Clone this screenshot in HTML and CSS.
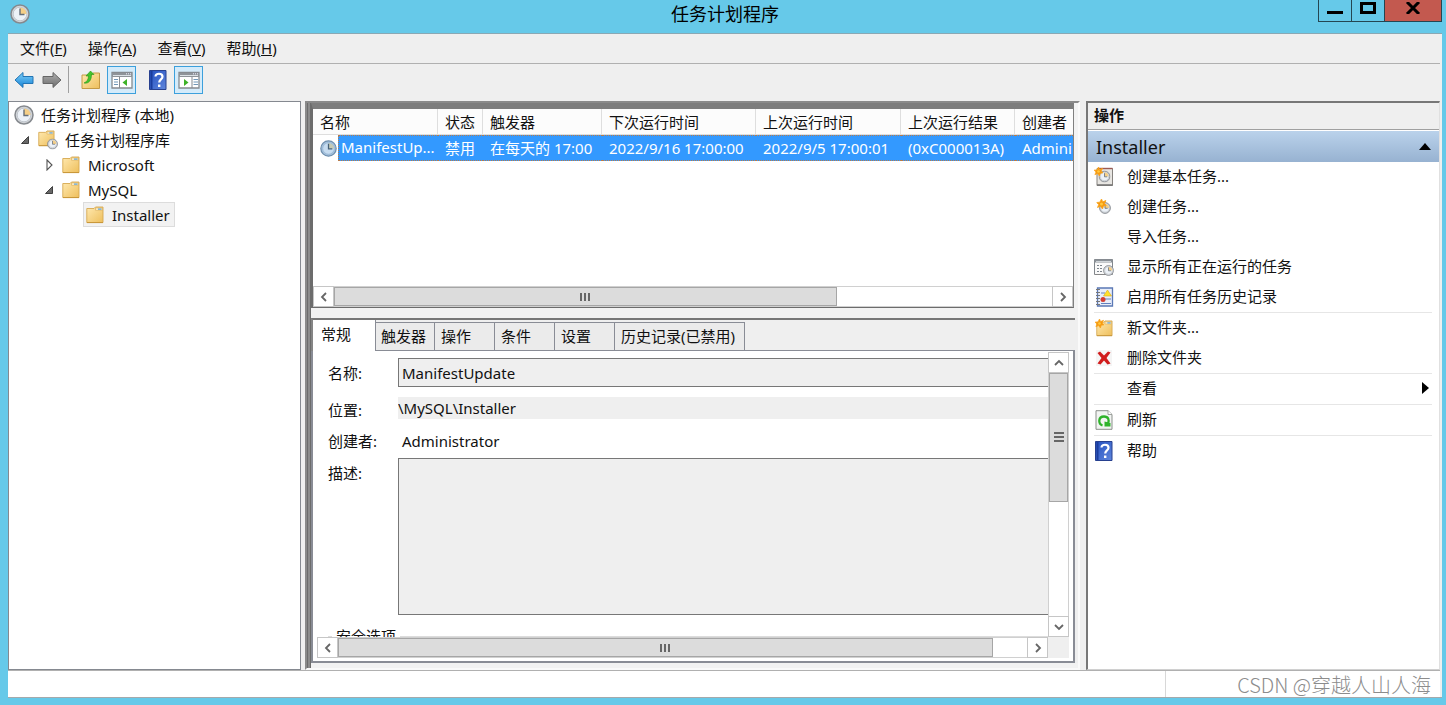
FILE: index.html
```html
<!DOCTYPE html>
<html lang="zh-CN">
<head>
<meta charset="utf-8">
<title>任务计划程序</title>
<link rel="stylesheet" href="styles.css">
</head>
<body>
<svg class="defs" aria-hidden="true">
  <defs>
    <linearGradient id="gFolder" x1="0" y1="0" x2="1" y2="1"><stop offset="0" stop-color="#ffe9b0"/><stop offset="1" stop-color="#eebf5c"/></linearGradient>
    <linearGradient id="gBlue" x1="0" y1="0" x2="0" y2="1"><stop offset="0" stop-color="#7fd0f8"/><stop offset="1" stop-color="#1482d6"/></linearGradient>
    <linearGradient id="gGray" x1="0" y1="0" x2="0" y2="1"><stop offset="0" stop-color="#b0b0b0"/><stop offset="1" stop-color="#6c6c6c"/></linearGradient>
    <linearGradient id="gHelp" x1="0" y1="0" x2="1" y2="1"><stop offset="0" stop-color="#2450c0"/><stop offset="1" stop-color="#5f86dc"/></linearGradient>
    <symbol id="clock" viewBox="0 0 20 20">
      <circle cx="10" cy="10" r="9" fill="#d3d6da" stroke="#85898e" stroke-width="1.5"/>
      <circle cx="10" cy="10" r="6.8" fill="#edf2f8" stroke="#b9bfc6" stroke-width=".8"/>
      <path d="M10 10V3.4A6.6 6.6 0 0 1 16.6 10Z" fill="#f5cf88"/>
      <path d="M10 4.5V10.5H14.5" fill="none" stroke="#66707b" stroke-width="1.4"/>
    </symbol>
    <symbol id="taskclock" viewBox="0 0 20 20">
      <circle cx="10" cy="10" r="9" fill="#a9c4de" stroke="#6f8fae" stroke-width="1.5"/>
      <circle cx="10" cy="10" r="6.8" fill="#c7dcf0" stroke="#8eb0d0" stroke-width=".8"/>
      <path d="M10 10V3.4A6.6 6.6 0 0 1 16.6 10Z" fill="#c5c9b4"/>
      <path d="M10 4.500V10.500H14.500" fill="none" stroke="#476177" stroke-width="1.5"/>
    </symbol>
    <symbol id="folder" viewBox="0 0 18 18">
      <path d="M.8 2.5H8L9.5 1H17V16.5H.8Z" fill="url(#gFolder)" stroke="#d6a850" stroke-width=".9"/>
      <path d="M9.5 2H16.3V4.2H9.5Z" fill="#fff6d8" stroke="#d6a850" stroke-width=".6"/>
      <path d="M12 3.1H15.5" stroke="#4c9be0" stroke-width="1.1"/>
      <path d="M1 16.6H17" stroke="#c79638"/>
    </symbol>
    <symbol id="library" viewBox="0 0 20 20">
      <use href="#folder" width="17" height="17"/>
      <use href="#clock" x="9" y="8.500" width="11" height="11"/>
    </symbol>
    <symbol id="open" viewBox="0 0 10 10"><path d="M8.500 1.500V8.500H1.500Z" fill="#686868" stroke="#222" stroke-width=".8"/></symbol>
    <symbol id="shut" viewBox="0 0 10 12"><path d="M3 1L8 6L3 11Z" fill="#fff" stroke="#555" stroke-width="1.1"/></symbol>
    <symbol id="back" viewBox="0 0 20 18"><path d="M1 9L9 1.500V5.500H19V12.500H9V16.500Z" fill="url(#gBlue)" stroke="#2375b4"/></symbol>
    <symbol id="forward" viewBox="0 0 20 18"><path d="M19 9L11 1.500V5.500H1V12.500H11V16.500Z" fill="url(#gGray)" stroke="#666"/></symbol>
    <symbol id="up" viewBox="0 0 20 20">
      <path d="M1 5H10L12 3H18.500V18.500H1Z" fill="url(#gFolder)" stroke="#c59a45"/>
      <path d="M3 13C6 12 7.500 9 7.500 6H5L9.500 1L13 4.500H10.500C10.500 10 8 14 3 13Z" fill="#43c52c" stroke="#259415" stroke-width=".6"/>
    </symbol>
    <symbol id="paneleft" viewBox="0 0 22 18">
      <path d="M1 1.500H21V17H1Z" fill="#fff" stroke="#868b90" stroke-width="1.300"/>
      <path d="M1 2H21V6H1Z" fill="#8f9499"/><path d="M2 4.500H20" stroke="#dce2e6"/><path d="M15 2.800H20" stroke="#eef" stroke-dasharray="1 1"/>
      <path d="M8.500 6V17" stroke="#868b90"/><path d="M3 8.500H7M3 11H7M3 13.500H7" stroke="#7198b8"/>
      <path d="M16 8V15L11.500 11.500Z" fill="#3eb228"/>
    </symbol>
    <symbol id="paneright" viewBox="0 0 22 18">
      <path d="M1 1.500H21V17H1Z" fill="#fff" stroke="#868b90" stroke-width="1.300"/>
      <path d="M1 2H21V6H1Z" fill="#8f9499"/><path d="M2 4.500H20" stroke="#dce2e6"/><path d="M15 2.800H20" stroke="#eef" stroke-dasharray="1 1"/>
      <path d="M14 6V17" stroke="#868b90"/><path d="M15.500 8.500H20M15.500 11H20M15.500 13.500H20" stroke="#7198b8"/>
      <path d="M6 8V15L10.500 11.500Z" fill="#3eb228"/>
    </symbol>
    <symbol id="help" viewBox="0 0 18 20">
      <path d="M.5.500H17V19.500H.5Z" fill="url(#gHelp)" stroke="#27408f"/><path d="M2.500 1V19" stroke="#1b3d9c" stroke-width="2"/>
      <path d="M6.500 6.500C6.500 2.800 13.500 2.800 13.500 6.700C13.500 9.500 10.200 9.400 10.200 12.500" fill="none" stroke="#fff" stroke-width="2.200"/><path d="M9 14.500H11.400V17H9Z" fill="#fff"/>
    </symbol>
    <symbol id="spark" viewBox="0 0 10 10"><path d="M5 0L6.200 2.800L9.500 1.500L8 4.500L10 6.500L7 7L6 10L4 7.300L1 8.500L2.200 5.500L0 3.500L3.300 3.200Z" fill="#f79a12" stroke="#f9a51c" stroke-width=".8"/><circle cx="5" cy="5" r="1.500" fill="#ffc93c"/></symbol>
    <symbol id="basic" viewBox="0 0 20 20">
      <path d="M3 1.500H18.500V18.500H3Z" fill="#e8e6e2" stroke="#86827e"/><path d="M4 1.500H18.500" fill="none" stroke="#9c5a54" stroke-width="1.400"/><path d="M3 18H18.500" stroke="#777" stroke-width="1.600"/>
      <use href="#clock" x="4.500" y="3.500" width="12" height="12"/><use href="#spark" width="9" height="9"/>
    </symbol>
    <symbol id="create" viewBox="0 0 20 20"><use href="#clock" x="5" y="5" width="12" height="12"/><use href="#spark" x="2.500" y="2" width="10" height="10"/></symbol>
    <symbol id="running" viewBox="0 0 20 20">
      <path d="M.5 2.500H18.500V17.500H.5Z" fill="#fafafa" stroke="#81868b"/><path d="M.5 2.500H18.500V5.500H.5Z" fill="#8b9197"/><path d="M2 4.500H17" stroke="#e1e5e8" stroke-width=".8"/>
      <path d="M3 8.500H9M3 11.500H9M3 14.500H9" stroke="#7d858d" stroke-dasharray="2 1"/><path d="M1 17.500H12" stroke="#888"/><use href="#clock" x="9" y="8" width="11" height="11"/>
    </symbol>
    <symbol id="history" viewBox="0 0 20 20">
      <path d="M3.500 1H18.500V19H3.500Z" fill="#e9eef9" stroke="#5a78b5" stroke-width="1.300"/><path d="M2 2.500H6M2 5.500H6M2 8.500H6M2 11.500H6M2 14.500H6M2 17.500H6" stroke="#777" stroke-width="1.200"/>
      <path d="M7 6H11M11 12H17M7 16.500H17" stroke="#6281bd"/><path d="M13.500 3L17.500 9H9.500Z" fill="#ffe02a" stroke="#d6aa1c" stroke-width=".6"/><circle cx="9" cy="12.500" r="2.500" fill="#d43d34"/>
    </symbol>
    <symbol id="newfolder" viewBox="0 0 20 20"><use href="#folder" x="2" y="2" width="17" height="17"/><use href="#spark" x="1" y="1" width="9" height="9"/></symbol>
    <symbol id="delete" viewBox="0 0 20 20"><path d="M2 2H18V18H2Z" fill="#f5f5f5"/><path d="M3.500 5L6 3.500L10 7.500L14 3.500L16.500 4.500L12.500 10L16.500 15.500L13.500 16.500L10 12.500L6.500 16.500L3.500 15.500L7.500 10Z" fill="#d11d1d"/></symbol>
    <symbol id="refresh" viewBox="0 0 20 20">
      <path d="M2 .7H14L18 4.500V19.300H2Z" fill="#f2f4f2" stroke="#8a8f8a"/><path d="M14 .7V4.500H18" fill="#fff" stroke="#8a8f8a" stroke-width=".8"/>
      <path d="M8.500 15.500C4 14 4 6.500 10 6.500C14.500 6.500 15.500 10 14 13.500" fill="none" stroke="#2fb32b" stroke-width="2.300"/><path d="M10.500 11.500L16.500 13V16.500H10.500Z" fill="#2fb32b"/>
    </symbol>
    <symbol id="chevron" viewBox="0 0 10 10"><path d="M7 1L3 5L7 9" fill="none" stroke="#666" stroke-width="1.800"/></symbol>
  </defs>
</svg>

<header class="titlebar">
  <svg class="app-icon"><use href="#clock"/></svg>
  <h1>任务计划程序</h1>
  <div class="controls">
    <button aria-label="最小化"><svg viewBox="0 0 16 12"><path d="M0 10.500H16" stroke="#000" stroke-width="3"/></svg></button>
    <button aria-label="最大化"><svg viewBox="0 0 16 12"><path d="M1.500 1.500H14.500V10.500H1.500Z" fill="none" stroke="#000" stroke-width="3"/></svg></button>
    <button class="close" aria-label="关闭"><svg viewBox="0 0 16 12"><path d="M2 0L14 12M14 0L2 12" stroke="#000" stroke-width="3"/></svg></button>
  </div>
</header>

<div class="window">
  <nav class="menu">
    <button>文件(<u>F</u>)</button><button>操作(<u>A</u>)</button><button>查看(<u>V</u>)</button><button>帮助(<u>H</u>)</button>
  </nav>
  <div class="toolbar">
    <button aria-label="后退"><svg><use href="#back"/></svg></button>
    <button aria-label="前进"><svg><use href="#forward"/></svg></button>
    <span class="divider"></span>
    <button aria-label="向上"><svg><use href="#up"/></svg></button>
    <button class="pressed" aria-label="显示控制台树"><svg class="wide"><use href="#paneleft"/></svg></button>
    <button class="apart" aria-label="帮助"><svg><use href="#help"/></svg></button>
    <button class="pressed" aria-label="显示操作窗格"><svg class="wide"><use href="#paneright"/></svg></button>
  </div>

  <div class="panes">
    <aside class="tree">
      <ul>
        <li class="row root"><svg class="pic"><use href="#clock"/></svg>任务计划程序 (本地)</li>
        <li class="row level1"><svg class="twist"><use href="#open"/></svg><svg class="pic"><use href="#library"/></svg>任务计划程序库</li>
        <li class="row level2"><svg class="twist"><use href="#shut"/></svg><svg class="pic small"><use href="#folder"/></svg>Microsoft</li>
        <li class="row level2"><svg class="twist"><use href="#open"/></svg><svg class="pic small"><use href="#folder"/></svg>MySQL</li>
        <li class="row level3"><span class="selected"><svg class="pic small"><use href="#folder"/></svg>Installer</span></li>
      </ul>
    </aside>

    <main class="center">
      <section class="list">
        <div class="list-view">
          <table>
            <colgroup><col class="c-name"><col class="c-state"><col class="c-trigger"><col class="c-next"><col class="c-last"><col class="c-result"><col class="c-author"></colgroup>
            <thead><tr><th>名称</th><th>状态</th><th>触发器</th><th>下次运行时间</th><th>上次运行时间</th><th>上次运行结果</th><th>创建者</th></tr></thead>
            <tbody><tr><td class="name"><div><svg><use href="#taskclock"/></svg><span>ManifestUp...</span></div></td><td>禁用</td><td>在每天的 17:00</td><td>2022/9/16 17:00:00</td><td>2022/9/5 17:00:01</td><td>(0xC000013A)</td><td>Admini</td></tr></tbody>
          </table>
        </div>
        <div class="hscroll">
          <button aria-label="向左滚动"><svg><use href="#chevron"/></svg></button>
          <div class="track"><div class="thumb list-thumb"><i></i></div></div>
          <button class="flip" aria-label="向右滚动"><svg><use href="#chevron"/></svg></button>
        </div>
      </section>

      <section class="details">
        <div class="tabs" role="tablist">
          <button role="tab" class="active" aria-selected="true">常规</button><button role="tab">触发器</button><button role="tab">操作</button><button role="tab">条件</button><button role="tab">设置</button><button role="tab" class="long">历史记录(已禁用)</button><span class="rest"></span>
        </div>
        <div class="sheet">
          <form class="form">
            <label for="name" class="name-label">名称:</label><input id="name" class="name-box" value="ManifestUpdate" readonly>
            <label for="place" class="place-label">位置:</label><input id="place" class="place-box" value="\MySQL\Installer" readonly>
            <label for="author">创建者:</label><output id="author">Administrator</output>
            <label for="about" class="about-label">描述:</label><textarea id="about" readonly></textarea>
            <fieldset><legend>安全选项</legend></fieldset>
          </form>
          <div class="vscroll">
            <button class="up" aria-label="向上滚动"><svg><use href="#chevron"/></svg></button>
            <div class="track"><div class="thumb"><i></i></div></div>
            <button class="down" aria-label="向下滚动"><svg><use href="#chevron"/></svg></button>
          </div>
          <div class="hscroll">
            <button aria-label="向左滚动"><svg><use href="#chevron"/></svg></button>
            <div class="track"><div class="thumb sheet-thumb"><i></i></div></div>
            <button class="flip" aria-label="向右滚动"><svg><use href="#chevron"/></svg></button>
          </div>
          <div class="corner"></div>
        </div>
      </section>
    </main>

    <aside class="actions">
      <h2>操作</h2>
      <button class="group">Installer<svg viewBox="0 0 12 7"><path d="M0 7L6 0L12 7Z"/></svg></button>
      <ul>
        <li><button><svg class="pic"><use href="#basic"/></svg>创建基本任务...</button></li>
        <li><button><svg class="pic"><use href="#create"/></svg>创建任务...</button></li>
        <li><button><span class="pic"></span>导入任务...</button></li>
        <li><button><svg class="pic"><use href="#running"/></svg>显示所有正在运行的任务</button></li>
        <li><button><svg class="pic"><use href="#history"/></svg>启用所有任务历史记录</button></li>
        <li class="ruled"><button><svg class="pic"><use href="#newfolder"/></svg>新文件夹...</button></li>
        <li><button><svg class="pic"><use href="#delete"/></svg>删除文件夹</button></li>
        <li class="ruled"><button><span class="pic"></span>查看<svg class="more" viewBox="0 0 7 12"><path d="M0 0L7 6L0 12Z"/></svg></button></li>
        <li class="ruled"><button><svg class="pic"><use href="#refresh"/></svg>刷新</button></li>
        <li class="ruled"><button><svg class="pic"><use href="#help"/></svg>帮助</button></li>
      </ul>
    </aside>
  </div>

  <footer class="status"><span class="mark">CSDN @穿越人山人海</span></footer>
</div>
</body>
</html>
```
FILE: styles.css
```css
* { box-sizing: border-box; }
body {
  margin: 0;
  height: 100vh;
  display: flex;
  flex-direction: column;
  padding: 0 4px 7px 8px;
  background: #66c9e9;
  color: #111;
  font: 15px/20px "Noto Sans", "Noto Sans CJK SC", sans-serif;
  overflow: hidden;
}
button, input, textarea {
  font: inherit;
  color: inherit;
  margin: 0;
  padding: 0;
  border: 0;
  border-radius: 0;
  background: none;
}
ul { list-style: none; margin: 0; padding: 0; }
svg { display: block; flex: none; }
.defs { position: absolute; width: 0; height: 0; }

/* Title bar */
.titlebar {
  display: grid;
  grid-template-columns: 1fr auto 1fr;
  height: 33px;
  flex: none;
}
.app-icon { width: 20px; height: 20px; margin: 4px 0 0 2px; }
.titlebar h1 { margin: 0; font-size: 18px; font-weight: 400; line-height: 29px; color: #000; }
.controls { display: flex; justify-self: end; height: 22px; border: 1px solid #244652; border-top: 0; }
.controls button { width: 33px; display: flex; justify-content: center; border-right: 1px solid #244652; }
.controls svg { width: 16px; height: 12px; margin-top: 2px; }
.controls .close { width: 56px; background: #c3594f; border: 0; }

.window {
  flex: 1;
  min-height: 0;
  display: flex;
  flex-direction: column;
  background: #efefef;
  border-top: 1px solid #8aa8b4;
  border-bottom: 1px solid #a5a9ab;
  padding-right: 2px;
}
.menu {
  display: flex;
  gap: 21px;
  height: 30px;
  padding: 0 0 1px 12px;
  border-bottom: 1px solid #b0b0b0;
  flex: none;
}
.toolbar { display: flex; align-items: center; height: 37px; padding: 0 0 6px 6px; flex: none; }
.toolbar button { height: 28px; display: grid; place-items: center; }
.toolbar svg { width: 20px; height: 20px; }
.toolbar button + button { margin-left: 8px; }
.toolbar .divider { width: 1px; height: 27px; background: #a0a0a0; margin: 0 12px 0 6px; }
.toolbar .pressed { width: 29px; border: 1px solid #3ca0dc; background: #d4ebfa; outline: 0; }
.toolbar button + .pressed { margin-left: 6px; }
.toolbar .wide { width: 22px; height: 18px; }
.toolbar .apart { margin-left: 12px; }

.panes {
  flex: 1;
  min-height: 0;
  display: grid;
  grid-template: minmax(0, 1fr) / 293px minmax(0, 1fr) 354px;
}

/* Console tree */
.tree { background: #fff; border: 1px solid #858990; }
.row { display: flex; align-items: center; height: 25px; white-space: nowrap; }
.pic { width: 20px; height: 20px; margin-right: 7px; flex: none; }
.pic.small { width: 18px; height: 18px; margin-right: 8px; }
.twist { width: 10px; height: 12px; margin-right: 8px; }
.root { padding-left: 5px; }
.level1 { padding-left: 11px; }
.level2 { padding-left: 35px; }
.level3 { padding-left: 74px; }
.selected { display: flex; align-items: center; height: 25px; padding: 0 4px 0 2px; background: #f2f2f2; border: 1px solid #dcdcdc; }

/* Task list */
.center {
  margin: 0 6px 0 4px;
  display: flex;
  flex-direction: column;
  border: 2px solid #8a8a8a;
  border-right-color: #fafafa;
  border-bottom-color: #fafafa;
  background: repeating-linear-gradient(90deg, #6c6c6c 0 1px, #8c8c8c 1px 3px);
  padding: 0 0 0 4px;
}
.list {
  height: 205px;
  flex: none;
  display: flex;
  flex-direction: column;
  border: solid #6c6c6c;
  border-width: 6px 1px 1px 2px;
  border-top-color: #7d7d7d;
  border-right-color: #808080;
  margin-right: 4px;
  background: #fff;
  box-shadow: 4px 0 #f3f3f3;
}
.list-view { flex: 1; overflow: hidden; }
table { table-layout: fixed; width: 822px; border-collapse: separate; border-spacing: 0; white-space: nowrap; }
.c-name { width: 125px; }
.c-state { width: 45px; }
.c-trigger { width: 119px; }
.c-next { width: 154px; }
.c-last { width: 145px; }
.c-result { width: 114px; }
.c-author { width: 120px; }
th { height: 26px; padding: 0 0 0 7px; text-align: left; font-weight: 400; border-right: 1px solid #dedede; border-bottom: 1px solid #dedede; background: #fcfcfc; }
td { height: 26px; padding: 0 0 1px 7px; color: #fff; background: #3399ff; border: dotted #b77b4a; border-width: 1px 0; }
td.name { padding: 0; border: 0; background: #fff; }
.name div { display: flex; align-items: center; height: 26px; padding-left: 7px; }
.name svg { width: 17px; height: 17px; }
.name span { flex: 1; height: 26px; line-height: 23px; padding-left: 2px; margin-left: 1px; background: #3399ff; border: dotted #b77b4a; border-width: 1px 0 1px 1px; }

/* Scroll bars */
.hscroll, .vscroll { display: flex; background: #fff; }
.hscroll { height: 21px; }
.hscroll button, .vscroll button { width: 21px; height: 21px; flex: none; display: grid; place-items: center; border: 1px solid #c6c6c6; background: #fff; }
.hscroll svg, .vscroll svg { width: 10px; height: 10px; }
.flip svg { transform: rotate(180deg); }
.up svg { transform: rotate(90deg); }
.down svg { transform: rotate(270deg); }
.track { flex: 1; border: solid #d0d0d0; border-width: 1px 0; }
.thumb { display: grid; place-items: center; background: #dcdcdc; border: 1px solid #a6a6a6; }
.hscroll .thumb { height: 19px; }
.list-thumb { width: 70%; }
.sheet-thumb { width: 95%; }
.thumb i { width: 10px; height: 8px; background: repeating-linear-gradient(90deg, #666 0 2px, transparent 2px 4px); }
.vscroll { flex-direction: column; }
.vscroll .track { border-width: 0 1px; }
.vscroll .thumb { height: 53%; }
.vscroll .thumb i { height: 10px; background: repeating-linear-gradient(#666 0 2px, transparent 2px 4px); }

/* Task details */
.details {
  flex: 1;
  min-height: 0;
  display: flex;
  flex-direction: column;
  border-top: 10px solid #f2f2f2;
  border-bottom: 5px solid #f2f2f2;
  background: #efefef;
  padding-right: 3px;
}
.tabs { display: flex; align-items: flex-end; border-top: 2px solid #777; border-left: 2px solid #858585; height: 33px; flex: none; }
.tabs button { width: 60px; height: 29px; padding: 0 6px 1px; text-align: left; border: 1px solid #898c95; border-left: 0; background: #ebebeb; white-space: nowrap; }
.tabs button:nth-child(2) { width: 59px; padding-left: 5px; }
.tabs .active { width: 63px; height: 31px; padding: 0 8px 4px; background: #fff; border-width: 0 1px 0 0; }
.tabs .long { width: 130px; }
.tabs .rest { flex: 1; border-bottom: 1px solid #898c95; }
.sheet {
  flex: 1;
  min-height: 0;
  display: grid;
  grid-template: minmax(0, 1fr) 21px / minmax(0, 1fr) 21px;
  padding: 1px 4px 3px;
  background: #fff;
  border: solid #898c95;
  border-width: 0 2px 2px;
}
.form {
  display: grid;
  grid-template-columns: 70px minmax(0, 1fr);
  grid-template-rows: 39px 33px 28px 168px 40px;
  align-items: start;
  padding: 6px 0 0 11px;
  min-height: 0;
  overflow: hidden;
}
.form label, .form output { line-height: 22px; }
.form .name-label { line-height: 30px; }
.form .place-label { line-height: 27px; }
.form .about-label { line-height: 30px; }
.name-box { height: 29px; padding: 0 0 0 3px; background: #efefef; border: 1px solid #777; border-right: 0; }
.place-box { height: 22px; background: #efefef; }
output { padding-left: 4px; }
textarea { height: 157px; background: #efefef; border: 1px solid #777; border-right: 0; resize: none; }
fieldset { grid-column: 1 / 3; height: 40px; margin: 0; padding: 0 3px; border: 1px solid #dcdcdc; border-right: 0; }
legend { padding: 0 4px; }
.corner { background: #efefef; }

/* Actions */
.actions { background: #fff; border: solid #777; border-width: 2px 1px 1px 2px; border-right-color: #e0e0e0; border-bottom-color: #d0d0d0; }
.actions h2 { margin: 0; height: 27px; padding-left: 6px; font-size: 15px; line-height: 25px; background: #efefef; border-bottom: 1px solid #a0a0a0; }
.group { width: 100%; height: 32px; display: flex; justify-content: space-between; align-items: center; padding: 0 8px; font-size: 18px; background: linear-gradient(#bad2eb, #97b2d1); border-top: 1px solid #fff; }
.group svg { width: 12px; height: 7px; }
.actions ul { padding: 0 7px 0 6px; }
.actions li button { width: 100%; height: 30px; display: flex; align-items: center; text-align: left; padding-bottom: 2px; }
.actions .pic { margin: 2px 13px 0 0; }
.ruled { border-top: 1px solid #e6e6e6; }
.more { width: 7px; height: 12px; margin: 0 3px 0 auto; }

/* Status bar */
.status { display: flex; justify-content: flex-end; height: 27px; flex: none; background: #fff; border-top: 1px solid #b0b0b0; }
.mark { width: 275px; padding-right: 9px; border-left: 1px solid #d8d8d8; text-align: right; font: 300 20px/27px "Noto Sans CJK SC", sans-serif; color: #8c8c8c; white-space: nowrap; }
```
